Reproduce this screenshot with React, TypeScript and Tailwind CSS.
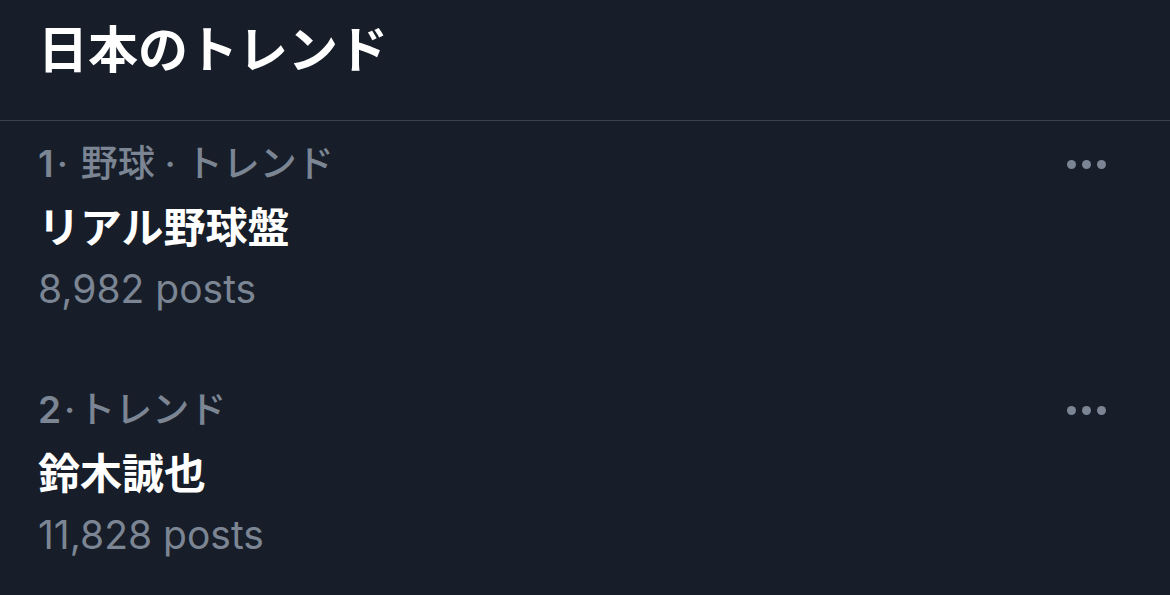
import React from "react";

function Dots() {
  return (
    <div className="flex h-[46px] items-center gap-[6px]">
      <span className="block w-[9px] h-[9px] rounded-full bg-[#7b8593]" />
      <span className="block w-[9px] h-[9px] rounded-full bg-[#7b8593]" />
      <span className="block w-[9px] h-[9px] rounded-full bg-[#7b8593]" />
    </div>
  );
}

function Trend({ meta, title, posts }: { meta: React.ReactNode; title: string; posts: string }) {
  return (
    <div className="flex items-start justify-between pl-[38px] pr-[64px]">
      <div className="flex flex-col">
        <div className="text-[37px] leading-[46px] font-medium text-[#7b8593]">{meta}</div>
        <div className="mt-[9px] text-[42px] leading-[64px] font-bold text-white">{title}</div>
        <div className="text-[39px] leading-[58px] text-[#7b8593]">{posts}</div>
      </div>
      <Dots />
    </div>
  );
}

export default function App() {
  return (
    <div className="w-[1170px] h-[595px] overflow-hidden bg-[#171e29] font-['Inter','Noto_Sans_CJK_JP',sans-serif]">
      <div className="h-[121px] border-b border-[#3a414b] pl-[38px] pt-[18px]">
        <h1 className="text-[50px] leading-[64px] font-bold text-white">日本のトレンド</h1>
      </div>
      <div className="flex flex-col gap-[69px] pt-[20px]">
        <Trend meta={<><span className="font-semibold">1</span><span className="mx-[3px]">·</span> 野球 · トレンド</>} title="リアル野球盤" posts="8,982 posts" />
        <Trend meta={<><span className="font-semibold">2</span><span className="mx-[3px]">·</span>トレンド</>} title="鈴木誠也" posts="11,828 posts" />
      </div>
    </div>
  );
}
